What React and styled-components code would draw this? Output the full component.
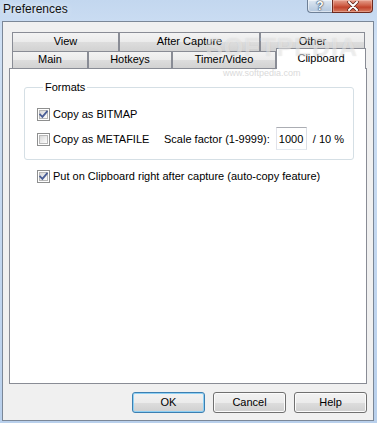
import styled, { createGlobalStyle } from "styled-components";

const Global = createGlobalStyle`
  html, body {
    margin: 0;
    padding: 0;
  }
  body {
    width: 377px;
    height: 423px;
    overflow: hidden;
    font-family: "Liberation Sans", Arial, sans-serif;
    font-size: 11px;
    color: #000;
  }
`;

const Window = styled.div`
  position: relative;
  box-sizing: border-box;
  width: 377px;
  height: 423px;
  display: flex;
  flex-direction: column;
  background: linear-gradient(to bottom, #c3d7ef 0px, #cfe0f4 40px, #b9d0ec 100%);
`;

const TitleBar = styled.div`
  height: 21px;
  display: flex;
  align-items: flex-start;
  padding-left: 3px;
  flex-shrink: 0;
`;

const Title = styled.span`
  font-size: 12px;
  line-height: 18px;
  color: #111;
  text-shadow: 0 0 6px rgba(255, 255, 255, 0.9);
`;

const CaptionButtons = styled.div`
  margin-left: auto;
  margin-right: 4px;
  display: flex;
`;

const HelpButton = styled.div`
  box-sizing: border-box;
  width: 25px;
  height: 13px;
  border: 1px solid #6d7f96;
  border-top: none;
  border-right: none;
  border-radius: 0 0 0 4px;
  background: linear-gradient(to bottom, #dfe8f2, #c3d3e5 60%, #b4c7dd);
  box-shadow: inset 0 0 0 1px rgba(255, 255, 255, 0.5);
  display: flex;
  align-items: center;
  justify-content: center;
  font-size: 12px;
  font-weight: bold;
  line-height: 12px;
  color: #fff;
  text-shadow: 0 0 1px #3b4a5e, 0 0 1px #3b4a5e, 0 0 2px #3b4a5e;
`;

const CloseButton = styled.div`
  box-sizing: border-box;
  width: 41px;
  height: 13px;
  border: 1px solid #6e2a1f;
  border-top: none;
  border-radius: 0 0 4px 0;
  background: linear-gradient(to bottom, #e5a08e, #cf6048 45%, #c1432c 60%, #d77b60);
  box-shadow: inset 0 0 0 1px rgba(255, 220, 210, 0.35);
  display: flex;
  align-items: center;
  justify-content: center;
`;

const Client = styled.div`
  flex: 1;
  display: flex;
  flex-direction: column;
  margin: 0 3px 2px 2px;
  border: 1px solid #7b8797;
  background: #f0f0f0;
  padding: 10px 6px 7px 6px;
  min-height: 0;
`;

const TabRow = styled.div`
  display: flex;
  align-items: flex-end;
  height: ${(p) => p.$h}px;
  padding-left: 3px;
`;

const Tab = styled.div`
  box-sizing: border-box;
  width: ${(p) => p.$w}px;
  height: ${(p) => p.$h}px;
  border: 1px solid #898c95;
  border-bottom: none;
  background: linear-gradient(
    to bottom,
    #f3f3f3 0%,
    #ebebeb 50%,
    #dddddd 51%,
    #d2d2d2 100%
  );
  text-align: center;
  line-height: ${(p) => p.$h - 2}px;
  white-space: nowrap;
`;

const SelectedTab = styled(Tab)`
  position: relative;
  z-index: 1;
  height: 21px;
  margin-bottom: -1px;
  background: #fff;
  line-height: 16px;
  padding-top: 1px;
`;

const Panel = styled.div`
  box-sizing: border-box;
  height: 316px;
  border: 1px solid #898c95;
  background: #fff;
  padding: 12px 12px 0 14px;
  flex-shrink: 0;
`;

const GroupBox = styled.fieldset`
  margin: 0;
  border: 1px solid #d5dfe5;
  border-radius: 3px;
  padding: 10px 0 8px 12px;
  min-width: 0;
`;

const Legend = styled.legend`
  padding: 0 2px;
  margin-left: 6px;
  line-height: 13px;
`;

const OptionRow = styled.div`
  display: flex;
  align-items: center;
  height: ${(p) => p.$h || 20}px;
  margin-top: ${(p) => p.$mt || 0}px;
  margin-left: ${(p) => p.$ml || 0}px;
`;

const Box = styled.span`
  box-sizing: border-box;
  width: 13px;
  height: 13px;
  flex-shrink: 0;
  border: 1px solid #8e8f8f;
  background: #fff;
  padding: 1px;
  display: flex;
`;

const BoxInner = styled.span`
  position: relative;
  flex: 1;
  border: 1px solid #b8b8b8;
  background: linear-gradient(135deg, #d8d8d8, #f6f6f6 80%, #fff);
`;

const CheckMark = styled.svg`
  position: absolute;
  left: -2px;
  top: -2px;
`;

const Label = styled.span`
  margin-left: 3px;
  width: ${(p) => (p.$w ? `${p.$w}px` : "auto")};
  white-space: nowrap;
`;

const InlineText = styled.span`
  white-space: nowrap;
  margin-right: ${(p) => p.$mr || 0}px;
`;

const NumberBox = styled.input`
  box-sizing: border-box;
  width: 31px;
  height: 23px;
  margin: 0 6px 1px 0;
  padding: 0 2px;
  border: 1px solid;
  border-color: #abadb3 #dbdfe6 #e3e9ef #e2e3ea;
  font-family: "Liberation Sans", Arial, sans-serif;
  font-size: 11px;
  color: #000;
  background: #fff;
  outline: none;
`;

const ButtonRow = styled.div`
  display: flex;
  justify-content: flex-end;
  gap: 8px;
  margin-top: 8px;
`;

const Button = styled.div`
  box-sizing: border-box;
  width: 73px;
  height: 21px;
  border: 1px solid ${(p) => (p.$default ? "#3c7fb1" : "#707070")};
  border-radius: 3px;
  background: linear-gradient(
    to bottom,
    #f2f2f2 0%,
    #ebebeb 50%,
    #dddddd 51%,
    #cfcfcf 100%
  );
  box-shadow: inset 0 0 0 1px ${(p) => (p.$default ? "#8ed0f4" : "#fbfbfb")};
  display: flex;
  align-items: center;
  justify-content: center;
  line-height: 13px;
`;

/* faint site watermark that lies over the tabs */
const Watermark = styled.div`
  position: absolute;
  left: 206px;
  top: 33px;
  font-size: 25px;
  font-weight: bold;
  letter-spacing: 1px;
  color: rgba(255, 255, 255, 0.4);
  text-shadow: 0 0 1px rgba(160, 160, 160, 0.3);
  pointer-events: none;
  z-index: 2;
`;

const WatermarkUrl = styled.div`
  position: absolute;
  left: 223px;
  top: 68px;
  font-size: 9px;
  color: #dadada;
  pointer-events: none;
  z-index: 2;
`;

const CheckBox = ({ checked }) => (
  <Box>
    <BoxInner>
      {checked && (
        <CheckMark width="11" height="11" viewBox="0 0 11 11">
          <path
            d="M2.2 5.6 L4.4 7.9 L8.9 2.6"
            fill="none"
            stroke="#4a5e96"
            strokeWidth="1.8"
            strokeLinecap="square"
          />
        </CheckMark>
      )}
    </BoxInner>
  </Box>
);

const backTabs = [
  { label: "View", w: 107 },
  { label: "After Capture", w: 141 },
  { label: "Other", w: 105 },
];

const frontTabs = [
  { label: "Main", w: 76 },
  { label: "Hotkeys", w: 84 },
  { label: "Timer/Video", w: 104 },
  { label: "Clipboard", w: 90, selected: true },
];

const App = () => (
  <>
    <Global />
    <Window>
      <TitleBar>
        <Title>Preferences</Title>
        <CaptionButtons>
          <HelpButton>?</HelpButton>
          <CloseButton>
            <svg width="14" height="10" viewBox="0 0 14 10">
              <path
                d="M3 1 L11 9 M11 1 L3 9"
                stroke="#5a2218"
                strokeWidth="3.4"
                strokeLinecap="round"
              />
              <path
                d="M3 1 L11 9 M11 1 L3 9"
                stroke="#fff"
                strokeWidth="2"
                strokeLinecap="round"
              />
            </svg>
          </CloseButton>
        </CaptionButtons>
      </TitleBar>

      <Client>
        <TabRow $h={19}>
          {backTabs.map((t) => (
            <Tab key={t.label} $w={t.w} $h={19}>
              {t.label}
            </Tab>
          ))}
        </TabRow>
        <TabRow $h={17}>
          {frontTabs.map((t) =>
            t.selected ? (
              <SelectedTab key={t.label} $w={t.w} $h={17}>
                {t.label}
              </SelectedTab>
            ) : (
              <Tab key={t.label} $w={t.w} $h={17}>
                {t.label}
              </Tab>
            )
          )}
        </TabRow>

        <Panel>
          <GroupBox>
            <Legend>Formats</Legend>
            <OptionRow>
              <CheckBox checked />
              <Label>Copy as BITMAP</Label>
            </OptionRow>
            <OptionRow $h={24} $mt={3}>
              <CheckBox />
              <Label $w={111}>Copy as METAFILE</Label>
              <InlineText $mr={6}>Scale factor (1-9999):</InlineText>
              <NumberBox defaultValue="1000" />
              <InlineText>/ 10 %</InlineText>
            </OptionRow>
          </GroupBox>
          <OptionRow $mt={6} $ml={13}>
            <CheckBox checked />
            <Label>Put on Clipboard right after capture (auto-copy feature)</Label>
          </OptionRow>
        </Panel>

        <ButtonRow>
          <Button $default>OK</Button>
          <Button>Cancel</Button>
          <Button>Help</Button>
        </ButtonRow>
      </Client>

      <Watermark>SOFTPEDIA</Watermark>
      <WatermarkUrl>www.softpedia.com</WatermarkUrl>
    </Window>
  </>
);

export default App;
